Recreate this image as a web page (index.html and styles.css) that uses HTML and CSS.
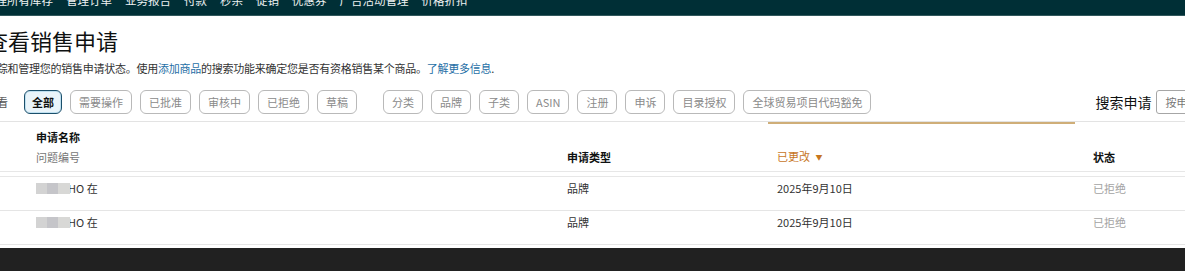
FILE: index.html
```html
<!DOCTYPE html>
<html lang="zh-CN">
<head>
  <meta charset="UTF-8" />
  <meta name="viewport" content="width=device-width, initial-scale=1" />
  <title>查看销售申请</title>
  <link rel="stylesheet" href="styles.css">
</head>
<body>

  <!-- TOP NAV (scrolled, only lower half visible) -->
  <header class="topnav">
    <ul class="topnav-list">
      <li>管理所有库存</li>
      <li>管理订单</li>
      <li>业务报告</li>
      <li>付款</li>
      <li>秒杀</li>
      <li>促销</li>
      <li>优惠券</li>
      <li>广告活动管理</li>
      <li>价格折扣</li>
    </ul>
  </header>

  <main class="page">
    <section class="intro">
      <h1 class="page-title">查看销售申请</h1>
      <p class="page-desc">跟踪和管理您的销售申请状态。使用<a href="#">添加商品</a>的搜索功能来确定您是否有资格销售某个商品。<a href="#">了解更多信息</a>.</p>

      <div class="filter-bar">
        <span class="filter-label">查看</span>
        <button class="chip chip-active">全部</button>
        <button class="chip">需要操作</button>
        <button class="chip">已批准</button>
        <button class="chip">审核中</button>
        <button class="chip">已拒绝</button>
        <button class="chip">草稿</button>
        <span class="filter-divider"></span>
        <button class="chip">分类</button>
        <button class="chip">品牌</button>
        <button class="chip">子类</button>
        <button class="chip">ASIN</button>
        <button class="chip">注册</button>
        <button class="chip">申诉</button>
        <button class="chip">目录授权</button>
        <button class="chip">全球贸易项目代码豁免</button>

        <div class="search">
          <label for="searchInput">搜索申请</label>
          <input type="text" id="searchInput" placeholder="按申请名称搜索" />
        </div>
      </div>
    </section>

    <!-- REQUESTS TABLE -->
    <div class="table">
      <div class="table-head">
        <div class="cell col-name">
          <span class="head-strong">申请名称</span>
          <span class="head-sub">问题编号</span>
        </div>
        <div class="cell col-type"><span class="head-strong">申请类型</span></div>
        <div class="cell col-date sorted"><span>已更改 <span class="sort-caret">▼</span></span></div>
        <div class="cell col-status"><span class="head-strong">状态</span></div>
      </div>

      <div class="table-body">
        <div class="table-row">
          <div class="cell col-name"><span class="masked"></span>HO 在</div>
          <div class="cell col-type">品牌</div>
          <div class="cell col-date">2025年9月10日</div>
          <div class="cell col-status status-rejected">已拒绝</div>
        </div>
        <div class="table-row">
          <div class="cell col-name"><span class="masked"></span>HO 在</div>
          <div class="cell col-type">品牌</div>
          <div class="cell col-date">2025年9月10日</div>
          <div class="cell col-status status-rejected">已拒绝</div>
        </div>
      </div>
    </div>
  </main>

  <footer class="page-foot"></footer>

</body>
</html>
```

FILE: styles.css
```css
* {
  box-sizing: border-box;
}

html, body {
  height: 100%;
  margin: 0;
  overflow: hidden;
}

body {
  display: flex;
  flex-direction: column;
  font-family: "Noto Sans CJK SC", "Noto Sans", sans-serif;
  font-size: 11px;
  line-height: 16px;
  color: #333;
  background: #fff;
}

/* top nav */
.topnav {
  height: 16px;
  flex: none;
  background: #002f36;
  border-bottom: 1px solid #31585c;
  overflow: hidden;
}

.topnav-list {
  list-style: none;
  margin: -8px 0 0 -16px;
  padding: 0;
  display: flex;
  gap: 13px;
  color: #eef2f2;
  font-size: 11.5px;
  line-height: 16px;
  white-space: nowrap;
}

/* page */
.page {
  flex: none;
}

.intro {
  margin-left: -14px;
}

.page-title {
  margin: 11px 0 0;
  font-size: 22px;
  line-height: 26px;
  font-weight: 400;
  color: #0f1111;
}

.page-desc {
  margin: 7px 0 0;
  white-space: nowrap;
  letter-spacing: -0.25px;
}

.page-desc a {
  color: #1f6fa6;
  text-decoration: none;
}

/* filter chips */
.filter-bar {
  margin-top: 14px;
  padding-bottom: 7px;
  border-bottom: 1px solid #e3e3e3;
  display: flex;
  align-items: center;
  gap: 8px;
  white-space: nowrap;
}

.filter-label {
  color: #555;
  margin-right: 8px;
}

.chip {
  font-family: inherit;
  font-size: 11px;
  line-height: 16px;
  padding: 3px 8px;
  border: 1px solid #b9b9b9;
  border-radius: 6px;
  background: #fff;
  color: #8a8a8a;
  cursor: pointer;
}

.chip-active {
  padding: 3px 7px;
  border-color: #1b4f6b;
  background: #e9f4fa;
  color: #0f1111;
  font-weight: 700;
  box-shadow: inset 0 0 0 1px #bfe0f0;
}

.filter-divider {
  width: 1px;
  height: 14px;
  margin: 0 5px;
  background: #e0e0e0;
}

.search {
  margin-left: 216px;
  display: flex;
  align-items: center;
  gap: 5px;
}

.search label {
  font-size: 14px;
  color: #0f1111;
}

.search input {
  width: 180px;
  height: 24px;
  padding: 0 8px;
  border: 1px solid #a6a6a6;
  border-radius: 3px;
  font-family: inherit;
  font-size: 11px;
  color: #333;
}

.search input::placeholder {
  color: #777;
}

/* table */
.table-head,
.table-row {
  display: grid;
  grid-template-columns: 559px 209px 307px 1fr;
}

.table-head {
  height: 50px;
  border-bottom: 1px solid #e7e7e7;
}

.table-head .cell {
  display: flex;
  flex-direction: column;
  justify-content: flex-end;
  padding-bottom: 6px;
}

.head-strong {
  font-weight: 700;
  color: #0f1111;
}

.head-sub {
  margin-top: 4px;
  color: #767676;
}

.col-name { padding-left: 36px; }
.col-type { padding-left: 8px; }
.col-date { padding-left: 9px; }
.col-status { padding-left: 18px; }

.table-head .sorted {
  border-top: 2px solid #cfae78;
  color: #c7761f;
}

.sort-caret {
  font-size: 7px;
  margin-left: 3px;
  vertical-align: 1px;
}

.table-body {
  margin-top: 4px;
  border-top: 1px solid #e7e7e7;
}

.table-row {
  height: 34px;
  border-bottom: 1px solid #e5e5e5;
  color: #333;
}

.table-row .cell {
  padding-top: 3px;
}

.table-row .status-rejected {
  color: #a3a3a3;
}

.masked {
  position: relative;
  z-index: 1;
  display: inline-block;
  width: 34px;
  height: 11px;
  margin-right: -2px;
  vertical-align: -1px;
  background: linear-gradient(90deg, #d3d3d3 0 33%, #c5c5c9 33% 66%, #d8d8d6 66%);
  filter: blur(0.6px);
}

.page-foot {
  flex: 1;
  margin-top: 3px;
  background: #212121;
}
```
